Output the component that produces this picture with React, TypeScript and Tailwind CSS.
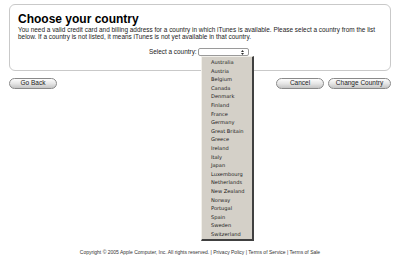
import React from "react";

const countries = [
  "Australia","Austria","Belgium","Canada","Denmark","Finland","France","Germany","Great Britain","Greece","Ireland","Italy","Japan","Luxembourg","Netherlands","New Zealand","Norway","Portugal","Spain","Sweden","Switzerland",
];

function Btn({ label, w }: { label: string; w: string }) {
  return (
    <div
      className={`${w} h-[11px] rounded-full border border-[#8a8a8a] bg-gradient-to-b from-[#fdfdfd] via-[#e6e6e6] to-[#c4c4c4] flex items-center justify-center text-[6.5px] leading-none text-[#222]`}
    >
      {label}
    </div>
  );
}

export default function App() {
  return (
    <div className="w-[400px] h-[259px] bg-white relative overflow-hidden" style={{ fontFamily: '"Liberation Sans", Arial, sans-serif' }}>
      <div className="pt-[4px] pl-[9px] pr-[9px]">
        <div className="h-[67px] rounded-[6px] border border-[#c9c9c9] pl-[8px] pr-[6px] pt-[7px]">
          <div className="text-[12px] font-bold leading-[14px] text-black">Choose your country</div>
          <div className="mt-[1px] flex flex-col text-[#222]">
            <span className="text-[6.45px] leading-[6.5px] text-nowrap">
              You need a valid credit card and billing address for a country in which iTunes is available. Please select a country from the list
            </span>
            <span className="text-[6.45px] leading-[6.5px] text-nowrap">
              below. If a country is not listed, it means iTunes is not yet available in that country.
            </span>
          </div>
          <div className="flex items-center mt-[8px] pl-[131px]">
            <span className="text-[6.4px] leading-none text-[#222] mr-[1px]">Select a country:</span>
            <div className="relative w-[51px] h-[8px] rounded-[2px] border border-[#9a9a9a] bg-white">
              <svg className="absolute right-[4px] top-[1px]" width="3" height="5" viewBox="0 0 3 5">
                <path d="M0 2 L1.5 0 L3 2 Z" fill="#333" />
                <path d="M0 3 L1.5 5 L3 3 Z" fill="#333" />
              </svg>
            </div>
          </div>
        </div>
        <div className="flex items-center mt-[7px]">
          <Btn label="Go Back" w="w-[48px]" />
          <div className="flex-1" />
          <Btn label="Cancel" w="w-[48px]" />
          <div className="w-[4px]" />
          <Btn label="Change Country" w="w-[63px]" />
        </div>
      </div>
      <div className="absolute left-[201px] top-[56px] w-[53px] bg-[#d4d0c8] border-l border-t border-l-[#f2f0ea] border-t-[#f2f0ea] border-r-2 border-b-2 border-r-[#404040] border-b-[#404040] pt-[1px] pb-[1px]">
        {countries.map((c) => (
          <div key={c} className="h-[8.6px] pl-[9px] leading-[8.6px] text-[#1a1a1a] whitespace-nowrap" style={{ fontFamily: '"DejaVu Sans", Tahoma, sans-serif', fontSize: "5.1px" }}>
            {c}
          </div>
        ))}
      </div>
      <div className="absolute left-0 right-0 top-[250px] text-center text-[5px] text-[#333] leading-none">
        Copyright © 2005 Apple Computer, Inc. All rights reserved. | Privacy Policy | Terms of Service | Terms of Sale
      </div>
    </div>
  );
}
